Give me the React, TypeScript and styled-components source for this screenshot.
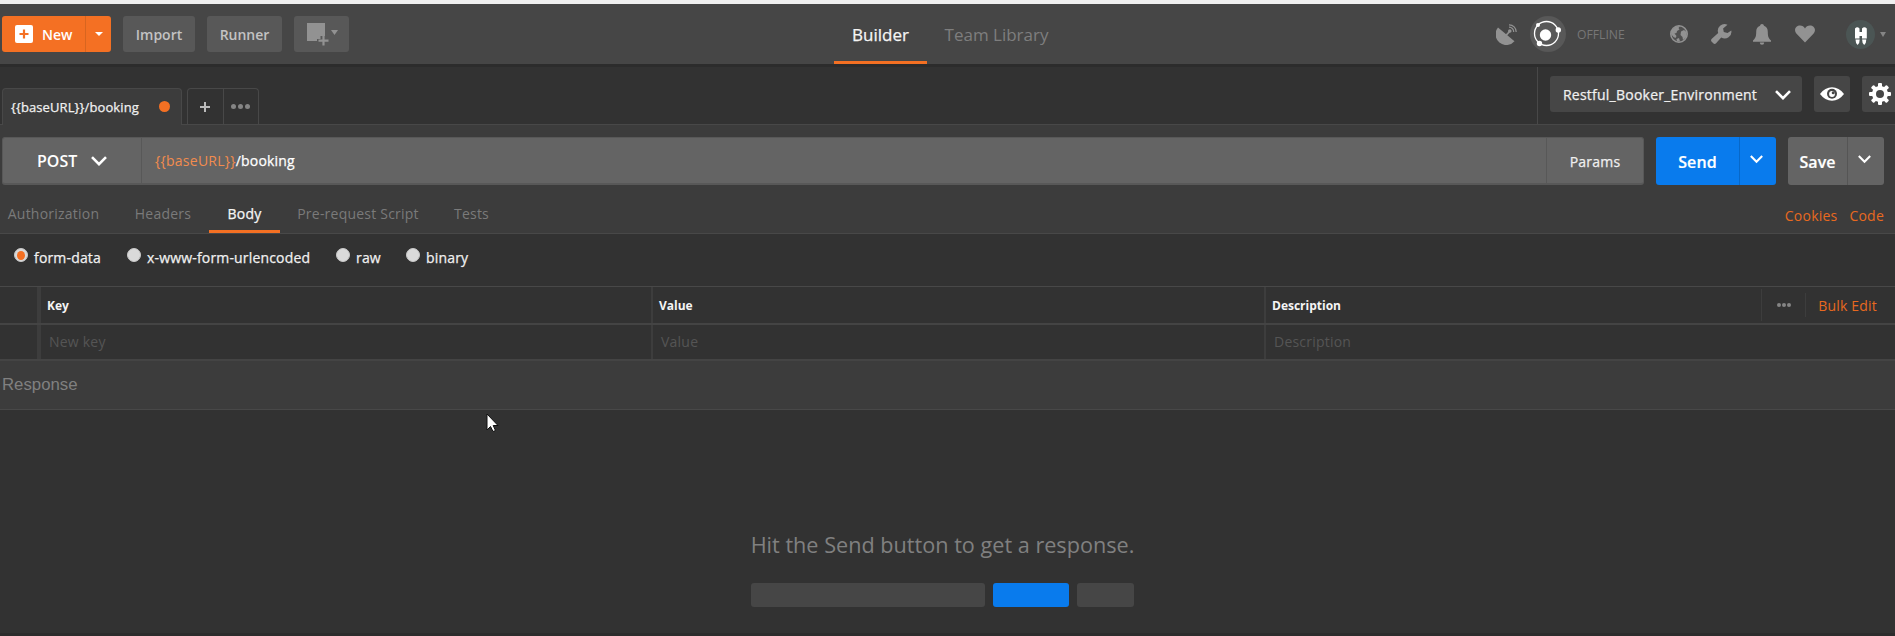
import React from 'react';
import styled, { createGlobalStyle, css } from 'styled-components';

const Global = createGlobalStyle`
  *{box-sizing:border-box}
  html,body{margin:0;height:636px;overflow:hidden;background:#323232}
  body{font-family:"Open Sans",sans-serif;color:#f0f0f0;font-size:14px}
  button{font:inherit;letter-spacing:inherit;color:inherit;border:0;margin:0;padding:0;background:none}
  svg{display:block;flex:none}
`;
const ORANGE = '#f47023';
const BLUE = '#097bed';
const medium = css`font-weight:500;-webkit-text-stroke:.25px currentColor;`;

const Page = styled.div`height:636px;display:flex;flex-direction:column;overflow:hidden;position:relative;`;
const WindowEdge = styled.div`height:4px;background:#f0f0f0;flex:none;`;
const TopBar = styled.header`
  height:63px;flex:none;background:#464646;border-bottom:3px solid #2c2c2c;
  display:grid;grid-template-columns:834px 1fr auto;
`;
const Actions = styled.div`display:flex;align-items:flex-start;padding:12px 0 0 2px;gap:12px;`;
const Split = styled.div`display:flex;height:36px;background:${ORANGE};border-radius:3px;width:109px;`;
const NewButton = styled.button`
  width:84px;border-right:1px solid #d8651f;display:flex;align-items:center;padding-left:13px;gap:9px;
  font-weight:600;font-size:14px;color:#fff;
`;
const ArrowButton = styled.button`flex:1;display:flex;align-items:center;justify-content:center;`;
const Caret = styled.i<{ $color: string; $w?: number; $h?: number }>`
  width:0;height:0;border:solid transparent;border-width:${p => p.$h ?? 4}px ${p => p.$w ?? 4}px 0;border-top-color:${p => p.$color};
`;
const GreyButton = styled.button<{ $w: number }>`
  width:${p => p.$w}px;height:36px;border-radius:3px;background:#585858;color:#c3c3c3;font-weight:600;font-size:14px;
  display:flex;align-items:center;justify-content:center;
`;
const MainTabs = styled.nav`display:flex;height:60px;`;
const MainTab = styled.a<{ $active?: boolean }>`
  width:${p => (p.$active ? 93 : 139)}px;display:flex;align-items:center;justify-content:center;padding-top:3px;
  font-size:17px;color:${p => (p.$active ? '#f5f5f5' : '#7e7e7e')};
  ${p => p.$active && medium}
  border-bottom:3px solid ${p => (p.$active ? ORANGE : 'transparent')};
`;
const Status = styled.div`display:flex;align-items:center;height:60px;padding-right:9px;`;
const Slot = styled.span<{ $w: number }>`width:${p => p.$w}px;display:flex;align-items:center;flex:none;`;
const Offline = styled.span`font-size:12.2px;color:#777;width:93px;`;
const SyncBadge = styled.span`width:36px;height:36px;border-radius:50%;background:#585858;margin-right:11px;`;
const Avatar = styled.span`width:29px;height:29px;border-radius:50%;background:#4b5554;margin-right:5px;`;

const TabBar = styled.div`height:58px;flex:none;display:flex;border-bottom:1px solid #484848;`;
const TabGroup = styled.div`flex:1;display:flex;align-items:flex-end;padding-left:2px;gap:5px;height:58px;`;
const RequestTab = styled.div`
  width:180px;height:37px;border:1px solid #484848;border-bottom:0;border-radius:4px 4px 0 0;background:#3c3c3c;
  display:flex;align-items:center;justify-content:space-between;padding:0 11px 0 8px;font-size:13px;letter-spacing:.1px;
  ${medium}
`;
const Dot = styled.i`width:11px;height:11px;border-radius:50%;background:${ORANGE};margin-top:-1px;`;
const TabTools = styled.div`display:flex;width:72px;height:36px;margin-bottom:1px;border:1px solid #484848;border-bottom:0;border-radius:4px 4px 0 0;`;
const TabTool = styled.button`
  flex:1;display:flex;align-items:center;justify-content:center;
  & + &{border-left:1px solid #484848}
`;
const EnvArea = styled.div`width:358px;border-left:1px solid #484848;display:flex;padding:9px 0 0 12px;gap:12px;overflow:hidden;`;
const EnvSelect = styled.div`
  width:252px;height:36px;flex:none;border-radius:3px;background:#464646;display:flex;align-items:center;
  justify-content:space-between;padding:1px 11px 0 13px;font-size:14px;letter-spacing:.23px;
  ${medium}
`;
const IconButton = styled.button`width:36px;height:36px;flex:none;border-radius:3px;background:#464646;display:flex;align-items:center;justify-content:center;`;

const RequestPanel = styled.section`height:109px;flex:none;background:#3c3c3c;border-bottom:1px solid #484848;`;
const UrlRow = styled.div`display:flex;padding:12px 11px 0 2px;height:72px;align-items:flex-start;`;
const UrlBox = styled.div`
  flex:1;height:48px;display:flex;background:#646464;border:1px solid #585858;border-bottom-width:2px;border-radius:3px;margin-right:12px;
`;
const Method = styled.div`width:139px;display:flex;align-items:center;padding-left:34px;gap:14px;font-weight:600;font-size:16px;color:#fff;border-right:1px solid #585858;`;
const Url = styled.div`flex:1;display:flex;align-items:center;padding-left:13px;font-size:14px;letter-spacing:.16px;color:#fff;${medium}`;
const Variable = styled.span`color:#f28c4e;font-weight:400;letter-spacing:.25px;-webkit-text-stroke:0;`;
const Params = styled.button`width:97px;border-left:1px solid #585858;font-size:14px;letter-spacing:.2px;color:#f0f0f0;padding:2px 0 0 0;${medium}`;
const SplitButton = styled.div<{ $blue?: boolean; $w: number }>`
  width:${p => p.$w}px;height:48px;border-radius:3px;display:flex;color:#fff;
  ${p => (p.$blue ? css`background:${BLUE};margin-right:12px;` : css`background:#646464;`)}
`;
const SplitMain = styled.button<{ $w: number }>`
  width:${p => p.$w}px;font-weight:600;font-size:16px;letter-spacing:.1px;padding-top:2px;border-right:1px solid rgba(0,0,0,.15);
  -webkit-text-stroke:.2px currentColor;
`;
const SplitArrow = styled.button`flex:1;display:flex;justify-content:center;align-items:center;padding:0 3px 3px 0;`;

const SubTabs = styled.nav`display:flex;height:36px;font-size:14px;letter-spacing:.22px;padding-right:11px;`;
const SubTab = styled.a<{ $w: number; $shift?: number; $active?: boolean }>`
  width:${p => p.$w}px;text-align:center;line-height:34px;height:36px;padding-left:${p => p.$shift ?? 0}px;
  color:${p => (p.$active ? '#f5f5f5' : '#7a7a7a')};
  ${p => p.$active && medium}
  border-bottom:3px solid ${p => (p.$active ? ORANGE : 'transparent')};
`;
const Links = styled.div`margin-left:auto;display:flex;gap:12px;line-height:37px;color:#e8691f;`;

const BodyTypes = styled.div`height:52px;flex:none;display:flex;padding-left:14px;`;
const Choice = styled.label<{ $w: number }>`width:${p => p.$w}px;display:flex;gap:6px;line-height:48px;font-size:14px;letter-spacing:.17px;${medium}`;
const Radio = styled.i<{ $on?: boolean }>`
  width:14px;height:14px;margin-top:14px;border-radius:50%;background:#dadada;border:1px solid #c8c8c8;
  display:flex;align-items:center;justify-content:center;
  &::after{content:'';width:8px;height:9px;border-radius:50%;background:${p => (p.$on ? ORANGE : 'transparent')}}
`;

const Table = styled.div`flex:none;border-top:1px solid #484848;`;
const Row = styled.div<{ $head?: boolean }>`
  display:grid;grid-template-columns:41px 610px 613px 1fr;height:${p => (p.$head ? 38 : 36)}px;
  border-bottom:2px solid #444;
`;
const Gutter = styled.div`border-right:4px solid #3d3d3d;`;
const Cell = styled.div<{ $head?: boolean }>`
  display:flex;align-items:center;padding-left:${p => (p.$head ? 6 : 8)}px;padding-bottom:${p => (p.$head ? 0 : 1)}px;
  font-size:${p => (p.$head ? 12 : 14)}px;font-weight:${p => (p.$head ? 700 : 400)};color:${p => (p.$head ? '#f5f5f5' : '#555')};
  letter-spacing:${p => (p.$head ? 0 : 0.22)}px;
  & + &{border-left:2px solid #3d3d3d}
`;
const Tools = styled.div`margin-left:auto;display:flex;align-items:center;font-weight:400;`;
const More = styled.button`width:44px;height:32px;border-left:1px solid #3d3d3d;display:flex;align-items:center;justify-content:center;`;
const BulkEdit = styled.button`height:24px;border-left:1px solid #3d3d3d;padding:1px 18px 0 12px;font-size:14px;line-height:23px;letter-spacing:.2px;color:#e8691f;`;
const ResponseHead = styled.h2`
  margin:0;height:49px;flex:none;background:#3c3c3c;border-bottom:1px solid #484848;
  font:400 16.800px/47px "Liberation Sans",sans-serif;color:#808080;padding-left:2px;
`;
const Empty = styled.section`flex:1;display:flex;flex-direction:column;align-items:center;padding:115px 10px 0 0;`;
const Hint = styled.p`margin:0;font-size:21.65px;line-height:39px;height:58px;color:#808080;`;
const Blocks = styled.div`display:flex;gap:8px;`;
const Block = styled.i<{ $w: number; $blue?: boolean }>`width:${p => p.$w}px;height:24px;border-radius:3px;background:${p => (p.$blue ? BLUE : '#464646')};`;
const Footer = styled.div`height:3px;flex:none;background:#2c2c2c;`;
const Pointer = styled.svg`position:absolute;left:486px;top:413px;`;

const Chevron = ({ w = 16, s = 2.6 }: { w?: number; s?: number }) => (
  <svg width={w} height={w * 0.625} viewBox="0 0 16 10" fill="none" stroke="#fff" strokeWidth={s}><path d="M1 1.2 8 8.2 15 1.2" /></svg>
);
const Dots = ({ r = 2.5, gap = 7, color = '#858585' }: { r?: number; gap?: number; color?: string }) => (
  <svg width={gap * 2 + r * 2} height={r * 2} fill={color}>
    {[0, 1, 2].map(i => <circle key={i} cx={r + i * gap} cy={r} r={r} />)}
  </svg>
);
const PlusBox = () => (
  <svg width="18" height="18"><rect width="18" height="18" rx="2" fill="#fff" /><path d="M9 4.5v9M4.5 9h9" stroke={ORANGE} strokeWidth="2.2" /></svg>
);
const NewWindow = () => (
  <svg width="32" height="24" viewBox="0 0 32 24">
    <path d="M1 1h18v13h-4.500v3H11v2H1z" fill="#929292" /><path d="M17.500 14v9.500M12.500 18.700h10" stroke="#929292" strokeWidth="2.200" /><path d="M25 8h7l-3.500 5z" fill="#929292" />
  </svg>
);
const Satellite = () => (
  <svg width="21" height="21" viewBox="0 0 21 21" fill="#929292">
    <path d="M2 3.500 18.500 17.200A10.300 10.300 0 0 1 2 3.500z" /><path d="M10 11.500 14 7" stroke="#929292" strokeWidth="1.800" /><circle cx="13.800" cy="7" r="1.800" />
    <path d="M13 3.200a4.600 4.600 0 0 1 4.700 4.700M13 .8a7 7 0 0 1 7.200 7.200" fill="none" stroke="#929292" strokeWidth="1.200" />
  </svg>
);
const Orbit = () => (
  <svg width="36" height="36" viewBox="0 0 36 36" fill="#fff">
    <circle cx="16.500" cy="17.500" r="12" fill="none" stroke="#fff" strokeWidth="1.300" /><circle cx="15.500" cy="19" r="5.700" />
    <circle cx="8" cy="9" r="2" /><circle cx="28.300" cy="14" r="2.700" /><circle cx="9.500" cy="27.500" r="2.700" />
  </svg>
);
const Globe = () => (
  <svg width="18" height="18" viewBox="0 0 18 18">
    <circle cx="9" cy="9" r="8.200" fill="#505050" stroke="#929292" strokeWidth="1.600" />
    <path d="M2 5 6 1.500 10 1 8.500 3 9.500 4.500 7 6 6.500 8 4.500 8.500 6.500 11 5.500 13 3.500 12 1 9zM11 6.500 14 5 16.500 7 16.500 12 13 15 12.500 12 10.500 10zM6.500 14 9 13 10 16.500 7 16.500z" fill="#929292" />
  </svg>
);
const Wrench = () => (
  <svg width="21" height="20" viewBox="0 0 21 20" fill="#929292">
    <path d="M16.500.8A6.700 6.700 0 0 0 7.200 9L.8 14.800a2.300 2.300 0 0 0 .2 3.300l1 1a2.300 2.300 0 0 0 3.300 0L10.200 13.500A6.700 6.700 0 0 0 20.300 6.500l-3.800 2.600-3.700-1-.7-3.600z" />
  </svg>
);
const Bell = () => (
  <svg width="18" height="21" viewBox="0 0 18 21" fill="#929292">
    <path d="M9 0a2 2 0 0 1 2 1.700c2.700 1 3.800 3 3.800 6.300 0 4.500.9 6.500 3.200 8.500v1.300H0v-1.300C2.300 14.500 3.200 12.500 3.200 8c0-3.300 1.100-5.300 3.800-6.300A2 2 0 0 1 9 0zM6.800 18.500h4.400a2.200 2.200 0 0 1-4.400 0z" />
  </svg>
);
const Heart = () => (
  <svg width="20" height="18" viewBox="0 0 20 18" fill="#929292"><path d="M10 17.500 1.800 9C-2 4.500 1 .5 5 .5c2.300 0 4 1 5 3 1-2 2.700-3 5-3 4 0 7 4 3.200 8.500z" /></svg>
);
const Binoculars = () => (
  <svg width="29" height="29" viewBox="0 0 29 29" fill="#fff">
    <path d="M9 8.500Q11.200 6 13.500 8.500V12h2.500V8.500Q18.300 6 20.800 8.500V18.500h-4.800V16h-2.500v2.500H9zM9.500 19.500h4.200q0 4-2.100 5.500-2.100-1.500-2.100-5.500zM16.100 19.500h4.200q0 4-2.100 5.500-2.100-1.500-2.100-5.500z" />
  </svg>
);
const Eye = () => (
  <svg width="24" height="14" viewBox="0 0 24 14"><path d="M0 7Q5 .3 12 .3T24 7Q19 13.700 12 13.700T0 7z" fill="#fff" /><circle cx="12" cy="6.700" r="5" fill="#464646" /><circle cx="12" cy="7" r="2.900" fill="#fff" /><circle cx="13.200" cy="5.800" r="1.500" fill="#464646" /></svg>
);
const Gear = () => (
  <svg width="22" height="22" viewBox="-11 -11 22 22" fill="#fff">
    {[0, 45, 90, 135].map(a => <rect key={a} x="-2" y="-11" width="4" height="22" rx="1" transform={`rotate(${a})`} />)}
    <circle r="8" /><circle r="4" fill="#464646" />
  </svg>
);

export default function App() {
  return (
    <Page>
      <Global />
      <WindowEdge />
      <TopBar>
        <Actions>
          <Split><NewButton><PlusBox />New</NewButton><ArrowButton><Caret $color="#fff" /></ArrowButton></Split>
          <GreyButton $w={72}>Import</GreyButton>
          <GreyButton $w={75}>Runner</GreyButton>
          <GreyButton $w={55}><NewWindow /></GreyButton>
        </Actions>
        <MainTabs><MainTab $active>Builder</MainTab><MainTab>Team Library</MainTab></MainTabs>
        <Status>
          <Slot $w={34}><Satellite /></Slot>
          <SyncBadge><Orbit /></SyncBadge>
          <Offline>OFFLINE</Offline>
          <Slot $w={41}><Globe /></Slot>
          <Slot $w={42}><Wrench /></Slot>
          <Slot $w={42}><Bell /></Slot>
          <Slot $w={51}><Heart /></Slot>
          <Avatar><Binoculars /></Avatar>
          <Caret $color="#858585" $w={3} $h={5} />
        </Status>
      </TopBar>
      <TabBar>
        <TabGroup>
          <RequestTab>{'{{baseURL}}/booking'}<Dot /></RequestTab>
          <TabTools>
            <TabTool><svg width="10" height="10"><path d="M5 0v10M0 5h10" stroke="#bbb" strokeWidth="2" /></svg></TabTool>
            <TabTool><Dots /></TabTool>
          </TabTools>
        </TabGroup>
        <EnvArea>
          <EnvSelect>Restful_Booker_Environment<Chevron /></EnvSelect>
          <IconButton><Eye /></IconButton>
          <IconButton><Gear /></IconButton>
        </EnvArea>
      </TabBar>
      <RequestPanel>
        <UrlRow>
          <UrlBox>
            <Method>POST<Chevron /></Method>
            <Url><Variable>{'{{baseURL}}'}</Variable>/booking</Url>
            <Params>Params</Params>
          </UrlBox>
          <SplitButton $blue $w={120}><SplitMain $w={84}>Send</SplitMain><SplitArrow><Chevron w={13} /></SplitArrow></SplitButton>
          <SplitButton $w={96}><SplitMain $w={60}>Save</SplitMain><SplitArrow><Chevron w={13} /></SplitArrow></SplitButton>
        </UrlRow>
        <SubTabs>
          <SubTab $w={107}>Authorization</SubTab>
          <SubTab $w={102} $shift={10}>Headers</SubTab>
          <SubTab $w={71} $active>Body</SubTab>
          <SubTab $w={156}>Pre-request Script</SubTab>
          <SubTab $w={71}>Tests</SubTab>
          <Links><span>Cookies</span><span>Code</span></Links>
        </SubTabs>
      </RequestPanel>
      <BodyTypes>
        <Choice $w={113}><Radio $on />form-data</Choice>
        <Choice $w={209}><Radio />x-www-form-urlencoded</Choice>
        <Choice $w={70}><Radio />raw</Choice>
        <Choice $w={80}><Radio />binary</Choice>
      </BodyTypes>
      <Table>
        <Row $head>
          <Gutter /><Cell $head>Key</Cell><Cell $head>Value</Cell>
          <Cell $head>Description<Tools><More><Dots r={2} gap={5} /></More><BulkEdit>Bulk Edit</BulkEdit></Tools></Cell>
        </Row>
        <Row><Gutter /><Cell>New key</Cell><Cell>Value</Cell><Cell>Description</Cell></Row>
      </Table>
      <ResponseHead>Response</ResponseHead>
      <Empty>
        <Hint>Hit the Send button to get a response.</Hint>
        <Blocks><Block $w={234} /><Block $w={76} $blue /><Block $w={57} /></Blocks>
      </Empty>
      <Footer />
      <Pointer width="14" height="20" viewBox="0 0 14 20"><path d="M1 1v16l3.500-3.500L7 18.500l2.500-1-2.300-5H12z" fill="#fff" stroke="#111" /></Pointer>
    </Page>
  );
}
